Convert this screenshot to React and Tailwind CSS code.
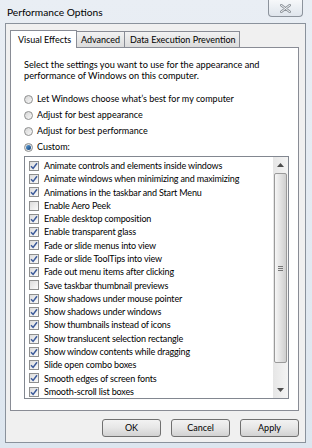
import React from "react";

const items = [
  ["Animate controls and elements inside windows", true],
  ["Animate windows when minimizing and maximizing", true],
  ["Animations in the taskbar and Start Menu", true],
  ["Enable Aero Peek", false],
  ["Enable desktop composition", true],
  ["Enable transparent glass", true],
  ["Fade or slide menus into view", true],
  ["Fade or slide ToolTips into view", true],
  ["Fade out menu items after clicking", true],
  ["Save taskbar thumbnail previews", false],
  ["Show shadows under mouse pointer", true],
  ["Show shadows under windows", true],
  ["Show thumbnails instead of icons", true],
  ["Show translucent selection rectangle", true],
  ["Show window contents while dragging", true],
  ["Slide open combo boxes", true],
  ["Smooth edges of screen fonts", true],
  ["Smooth-scroll list boxes", true],
];

const Radio = ({ checked }) => (
  <span className="w-[9px] h-[9px] rounded-full border border-[#8e8f8f] bg-gradient-to-br from-[#d6d6d6] to-[#f8f8f8] flex items-center justify-center shrink-0">
    {checked && <span className="w-[5px] h-[5px] rounded-full bg-gradient-to-br from-[#5fa1d8] to-[#0e3f7a]" />}
  </span>
);

const Check = ({ checked }) => (
  <span className="w-[10px] h-[10px] border border-[#8e8f8f] bg-gradient-to-br from-[#dcdcdc] to-[#fbfbfb] flex items-center justify-center shrink-0">
    {checked && (
      <svg width="8" height="8" viewBox="0 0 8 8">
        <path d="M1 4.2 L3.1 6.4 L7 1.2" fill="none" stroke="#3b5a9a" strokeWidth="1.5" />
      </svg>
    )}
  </span>
);

const Btn = ({ label }) => (
  <div className="w-[59px] h-[18px] rounded-[3px] border border-[#707070] bg-gradient-to-b from-[#f2f2f2] via-[#e6e6e6] to-[#d2d2d2] flex items-center justify-center text-[9px]">
    {label}
  </div>
);

export default function App() {
  return (
    <div
      className="w-[312px] h-[448px] bg-gradient-to-b from-[#e9eef4] to-[#dde6ef] flex flex-col text-black overflow-hidden"
      style={{ fontFamily: "Lato, 'Liberation Sans', sans-serif" }}
    >
      {/* title bar */}
      <div className="h-[23px] flex justify-between items-start">
        <div className="pl-[7px] pt-[5px] text-[10.2px] leading-[14px]">Performance Options</div>
        <div className="mr-[9px] w-[35px] h-[17px] rounded-b-[4px] border border-t-0 border-[#8c939c] bg-gradient-to-b from-[#f6f8fa] to-[#dfe5ec] flex items-center justify-center">
          <svg width="11" height="9" viewBox="0 0 11 9">
            <path d="M1 1 L10 8 M10 1 L1 8" stroke="#8d939a" strokeWidth="2.6" strokeLinecap="round" />
            <path d="M1 1 L10 8 M10 1 L1 8" stroke="#f4f6f8" strokeWidth="1" strokeLinecap="round" />
          </svg>
        </div>
      </div>

      {/* client area */}
      <div className="ml-[5px] w-[301px] h-[420px] border border-[#8a929c] bg-[#f0f0f0] flex flex-col pl-[4px] pr-[6px]">
        <div className="pt-[5px] flex items-end h-[23px] text-[9px] whitespace-nowrap">
          <div className="relative z-10 -mb-px h-[18px] w-[67px] bg-white border border-b-0 border-[#898c95] flex items-center pl-[7px]">
            Visual Effects
          </div>
          <div className="h-[16px] w-[48px] border border-l-0 border-b-0 border-[#898c95] bg-gradient-to-b from-[#f2f2f2] to-[#dcdcdc] flex items-center pl-[4px]">
            Advanced
          </div>
          <div className="h-[16px] w-[115px] border border-l-0 border-b-0 border-[#898c95] bg-gradient-to-b from-[#f2f2f2] to-[#dcdcdc] flex items-center pl-[5px]">
            Data Execution Prevention
          </div>
        </div>

        {/* panel */}
        <div className="h-[364px] border border-[#898c95] bg-white pt-[11px] pl-[13px] text-[9px]">
          <div className="leading-[11px] text-[9.2px]">
            Select the settings you want to use for the appearance and
            <br />
            performance of Windows on this computer.
          </div>
          <div className="mt-[10px]">
            {[
              ["Let Windows choose what\u2019s best for my computer", false],
              ["Adjust for best appearance", false],
              ["Adjust for best performance", false],
              ["Custom:", true],
            ].map(([t, c]) => (
              <div key={t} className="h-[16px] flex items-center gap-[4px]">
                <Radio checked={c} />
                <span>{t}</span>
              </div>
            ))}
          </div>

          {/* list box */}
          <div className="mt-[1px] w-[265px] h-[243px] border border-[#828790] flex">
            <div className="flex-1 pt-[2px] pl-[4px] tracking-[-0.15px]">
              {items.map(([t, c]) => (
                <div key={t} className="h-[13.3px] flex items-center gap-[5px]">
                  <Check checked={c} />
                  <span className="whitespace-nowrap">{t}</span>
                </div>
              ))}
            </div>
            <div className="w-[15px] bg-gradient-to-r from-[#e6e6e6] to-[#f4f4f4] flex flex-col items-center">
              <div className="h-[16px] w-full flex items-center justify-center">
                <svg width="7" height="4" viewBox="0 0 7 4"><path d="M0 4 L3.5 0 L7 4Z" fill="#4d4d4d" /></svg>
              </div>
              <div className="w-[13px] h-[190px] rounded-[2px] border border-[#9a9a9a] bg-gradient-to-r from-[#f6f6f6] via-[#e2e2e2] to-[#cfcfcf] flex items-center justify-center">
                <div className="flex flex-col gap-[1px]">
                  <div className="w-[5px] h-px bg-[#777]" />
                  <div className="w-[5px] h-px bg-[#777]" />
                  <div className="w-[5px] h-px bg-[#777]" />
                </div>
              </div>
              <div className="flex-1" />
              <div className="h-[16px] w-full flex items-center justify-center">
                <svg width="7" height="4" viewBox="0 0 7 4"><path d="M0 0 L3.5 4 L7 0Z" fill="#4d4d4d" /></svg>
              </div>
            </div>
          </div>
        </div>

        {/* buttons */}
        <div className="mt-[8px] flex justify-end gap-[10px]">
          <Btn label="OK" />
          <Btn label="Cancel" />
          <Btn label="Apply" />
        </div>
      </div>
    </div>
  );
}
